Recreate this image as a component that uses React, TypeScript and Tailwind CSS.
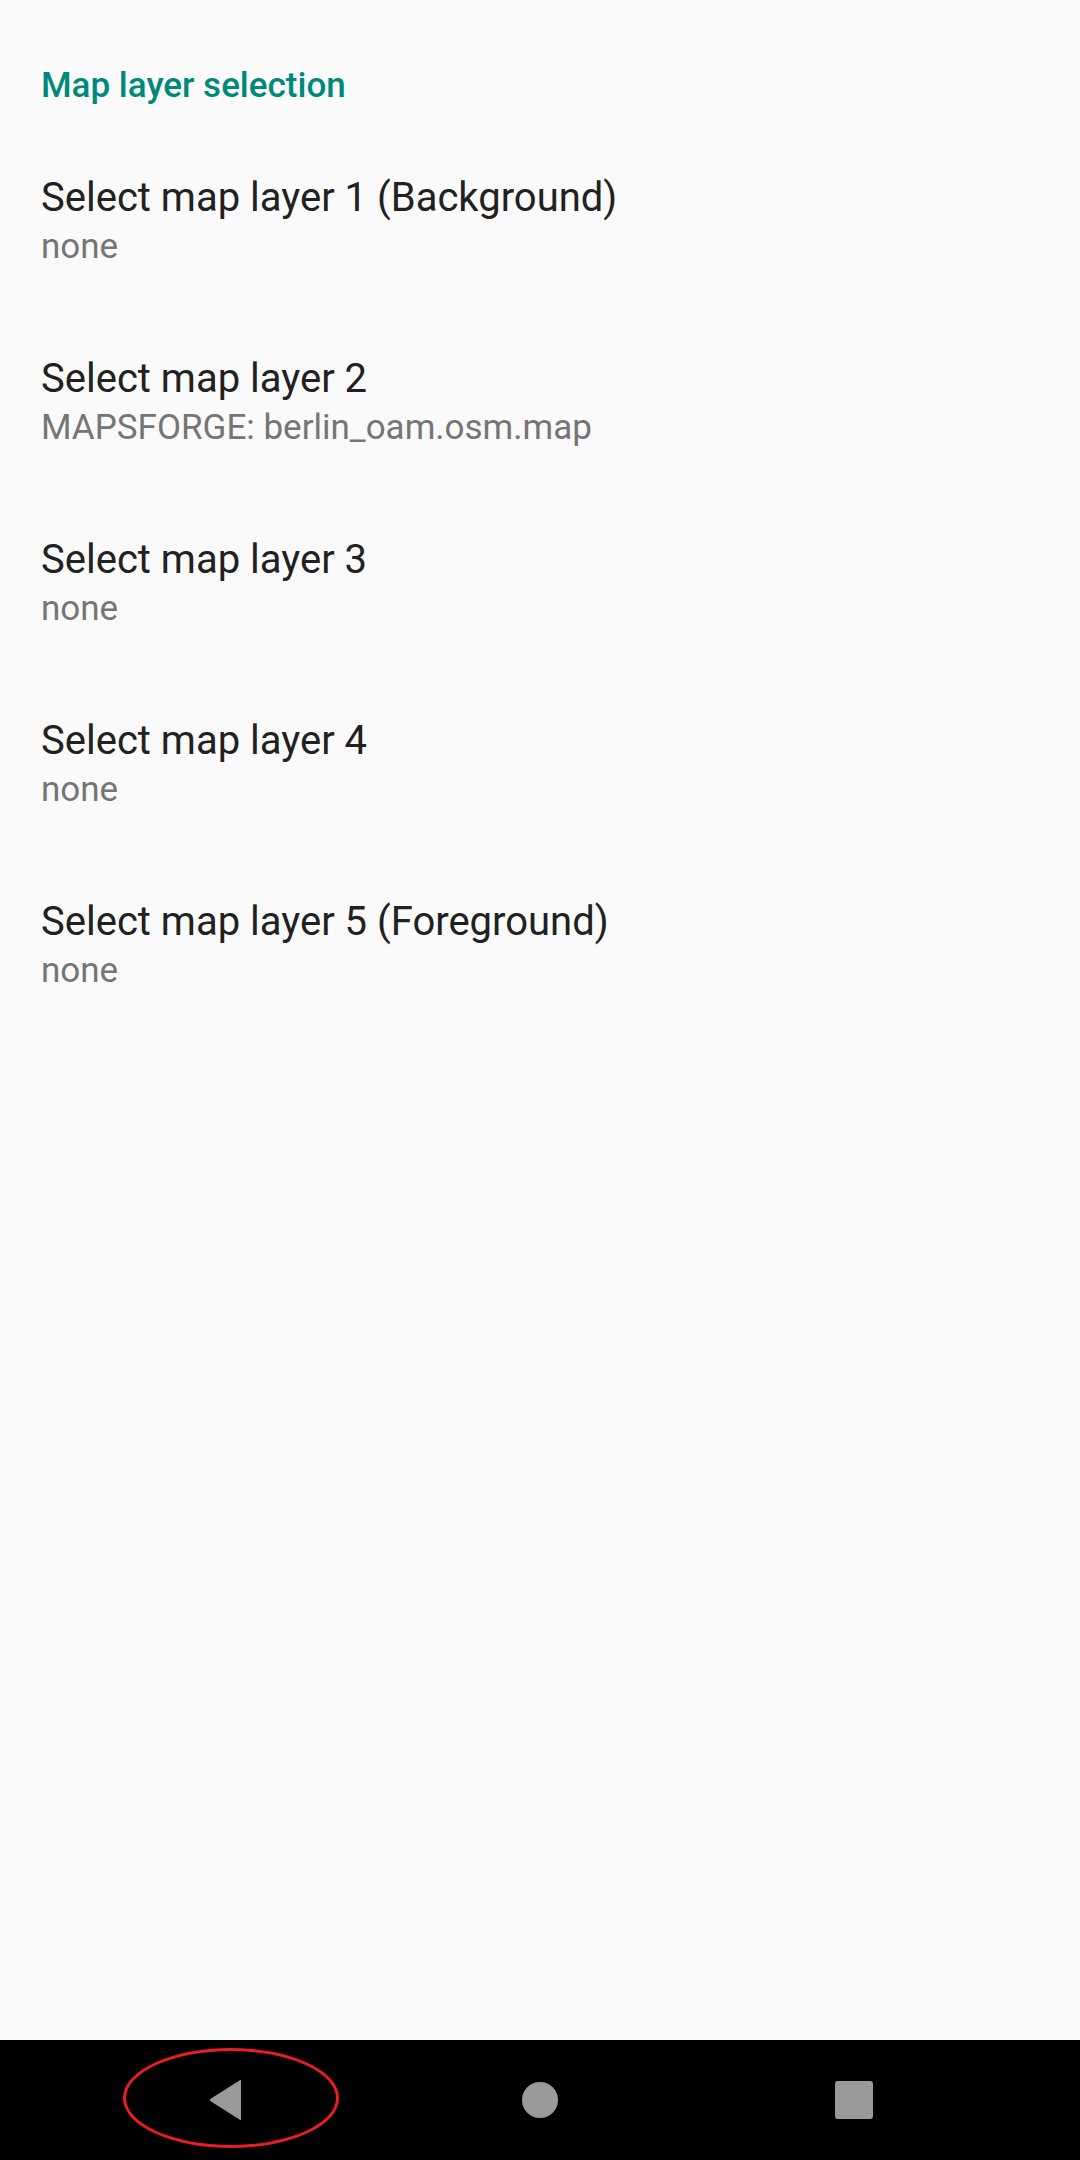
import React from 'react';

const layers = [
  { title: 'Select map layer 1 (Background)', value: 'none' },
  { title: 'Select map layer 2', value: 'MAPSFORGE: berlin_oam.osm.map' },
  { title: 'Select map layer 3', value: 'none' },
  { title: 'Select map layer 4', value: 'none' },
  { title: 'Select map layer 5 (Foreground)', value: 'none' },
];

function NavBar() {
  return (
    <div className="relative h-[120px] bg-black flex items-center justify-center">
      <div className="w-[314px] flex justify-center">
        <svg width="36" height="42" viewBox="0 0 36 42">
          <path d="M33 2 L33 40 Q33 42 31.5 40.5 L3 22.5 Q1 21 3 19.5 L31.5 1.5 Q33 0 33 2 Z" fill="#9a9a9a" />
        </svg>
      </div>
      <div className="w-[314px] flex justify-center">
        <div className="w-[36px] h-[36px] rounded-full bg-[#9a9a9a]" />
      </div>
      <div className="w-[314px] flex justify-center">
        <div className="w-[38px] h-[38px] rounded-[3px] bg-[#9a9a9a]" />
      </div>
      {/* red annotation ring round the back key */}
      <div className="absolute left-[123px] top-[8px] w-[216px] h-[100px] rounded-[50%] border-[3px] border-[#ec1c24]" />
    </div>
  );
}

export default function App() {
  return (
    <div className="min-h-[2160px] flex flex-col bg-[#fafafa] font-['Roboto','Liberation_Sans',sans-serif]">
      <div className="flex-1 flex flex-col">
        <div className="pt-[62px] pb-[22px] pl-[41px]">
          <div className="text-[35px] leading-[48px] font-medium text-[#00897b]">Map layer selection</div>
        </div>
        {layers.map((l) => (
          <div key={l.title} className="pl-[41px] pt-[42px] pb-[41px] flex flex-col">
            <div className="text-[40px] leading-[48px] text-[#212121]">{l.title}</div>
            <div className="text-[35px] leading-[50px] text-[#757575]">{l.value}</div>
          </div>
        ))}
      </div>
      <NavBar />
    </div>
  );
}
